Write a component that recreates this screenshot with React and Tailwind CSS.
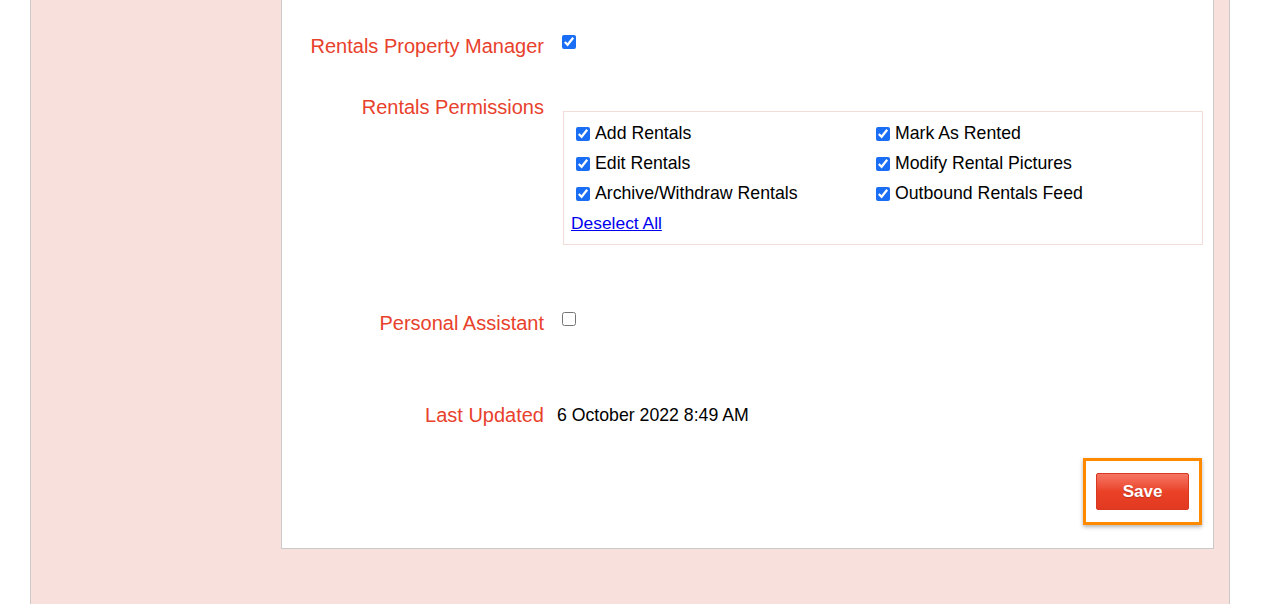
const PERMS = [
  ['Add Rentals', 'Mark As Rented'],
  ['Edit Rentals', 'Modify Rental Pictures'],
  ['Archive/Withdraw Rentals', 'Outbound Rentals Feed'],
];

function Box({ checked }) {
  return (
    <input
      type="checkbox"
      defaultChecked={checked}
      className="block m-0 w-[14px] h-[14px] shrink-0 accent-[#1a6ef5]"
    />
  );
}

function Label({ children }) {
  return (
    <div className="w-[262px] shrink-0 text-right text-[20px] leading-[24px] text-[#e8412c]">
      {children}
    </div>
  );
}

export default function App() {
  return (
    <div className="w-full h-[604px] bg-white overflow-hidden" style={{ fontFamily: '"Liberation Sans", Arial, sans-serif' }}>
      <div className="ml-[30px] w-[1200px] h-full border-x border-[#c9c9c9] bg-[#f8e1dd] pl-[250px] pr-[15px]">
        <div className="w-[933px] bg-white border-x border-b border-[#c9c9c9] flex flex-col pb-[23px]">
          {/* property manager */}
          <div className="flex items-start mt-[34px]">
            <Label>Rentals Property Manager</Label>
            <div className="ml-[18px] mt-px"><Box checked /></div>
          </div>

          {/* permissions */}
          <div className="flex items-start mt-[37px]">
            <Label>Rentals Permissions</Label>
            <div className="ml-[19px] mt-[16px] w-[640px] h-[134px] border border-[#f3ddd8] pl-[7px] pt-[7px] text-[17.7px] text-black">
              <div className="grid grid-cols-[300px_1fr]">
                {PERMS.flat().map((p) => (
                  <label key={p} className="flex items-center h-[30px] ml-[5px] gap-[5px]">
                    <Box checked />
                    <span className="-mt-px">{p}</span>
                  </label>
                ))}
              </div>
              <a href="#" className="block h-[28px] leading-[28px] text-[17.4px] text-[#0000ee] underline">Deselect All</a>
            </div>
          </div>

          {/* personal assistant */}
          <div className="flex items-start mt-[66px]">
            <Label>Personal Assistant</Label>
            <div className="ml-[18px] mt-px"><Box /></div>
          </div>

          {/* last updated */}
          <div className="flex items-center mt-[68px]">
            <Label>Last Updated</Label>
            <div className="ml-[13px] text-[17.7px] leading-[24px] text-black">6 October 2022 8:49 AM</div>
          </div>

          <div className="self-end mr-[11px] mt-[31px] w-[119px] h-[67px] border-[3px] border-[#ff8a00] shadow-[0_2px_4px_rgba(0,0,0,0.3)] flex items-center justify-center">
            <button className="w-[93px] h-[37px] rounded-[2px] border border-[#d8381f] bg-gradient-to-b from-[#f57563] via-[#ea4127] to-[#e23a20] text-white font-bold text-[17px] [text-shadow:0_1px_1px_rgba(0,0,0,0.2)]">
              Save
            </button>
          </div>
        </div>
      </div>
    </div>
  );
}
